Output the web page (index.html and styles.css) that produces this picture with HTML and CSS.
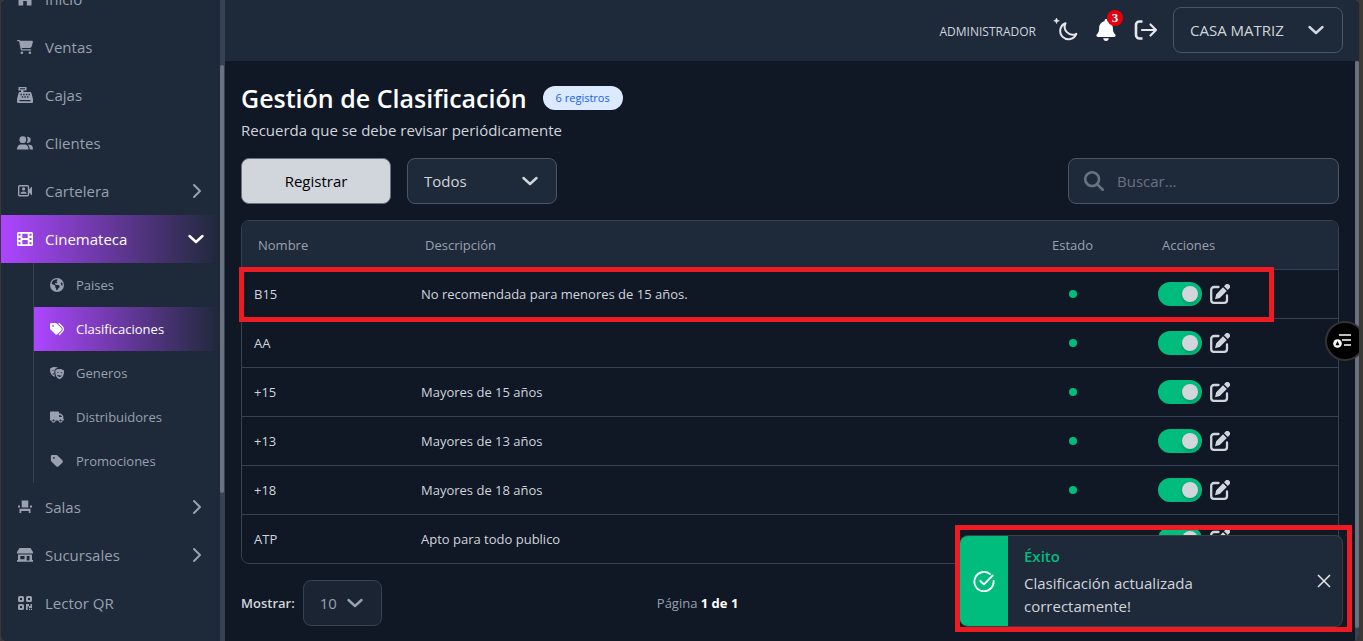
FILE: index.html
```html
<!DOCTYPE html>
<html lang="es">
<head>
    <meta charset="UTF-8">
    <meta name="viewport" content="width=device-width, initial-scale=1.0">
    <title>Gestión de Clasificación</title>
    <link rel="stylesheet" href="styles.css">
</head>
<body>
    <!-- Shared icons -->
    <svg class="sprite" aria-hidden="true">
        <symbol id="chevron-right" viewBox="0 0 16 16"><path d="M6 2l6 6-6 6" fill="none" stroke="currentColor" stroke-width="2" stroke-linecap="round" stroke-linejoin="round"/></symbol>
        <symbol id="chevron-down" viewBox="0 0 16 16"><path d="M1.500 5L8 11l6.500-6" fill="none" stroke="currentColor" stroke-width="2.400" stroke-linecap="round" stroke-linejoin="round"/></symbol>
        <symbol id="edit" viewBox="0 0 20 20">
            <path d="M8.500 3H4a2.800 2.800 0 0 0-2.800 2.800V16A2.800 2.800 0 0 0 4 18.800h10.200A2.800 2.800 0 0 0 17 16v-4.500" fill="none" stroke="currentColor" stroke-width="2.300" stroke-linecap="round"/>
            <path d="M13 3.200l3.800 3.800-7 7-4.800 1.300 1.200-5zM14 2.200l1.400-1.400a2.400 2.400 0 0 1 3.800 3.800L17.800 6z" fill="currentColor"/>
        </symbol>
    </svg>

    <div class="app">
        <aside class="sidebar">
            <nav class="menu">
                <a href="#" class="menu-item">
                    <svg class="icon" viewBox="0 0 16 16"><path d="M8 0L0 7h1.500v7.500h4.700V10h3.600v4.500h4.700V7H16z" fill="currentColor"/></svg>
                    <span>Inicio</span>
                </a>
                <a href="#" class="menu-item">
                    <svg class="icon" viewBox="0 0 576 512"><path fill="currentColor" d="M0 24C0 10.700 10.700 0 24 0H69.500c22 0 41.500 12.800 50.600 32h411c26.300 0 45.500 25 38.600 50.400l-41 152.300c-8.500 31.400-37 53.300-69.500 53.300H170.700l5.400 28.500c2.200 11.300 12.100 19.500 23.600 19.500H488c13.300 0 24 10.700 24 24s-10.700 24-24 24H199.700c-34.600 0-64.300-24.600-70.700-58.500L77.400 54.500c-.7-3.800-4-6.500-7.900-6.500H24C10.700 48 0 37.300 0 24zM128 464a48 48 0 1 1 96 0 48 48 0 1 1 -96 0zm336-48a48 48 0 1 1 0 96 48 48 0 1 1 0-96z"/></svg>
                    <span>Ventas</span>
                </a>
                <a href="#" class="menu-item">
                    <svg class="icon" viewBox="0 0 16 16"><path fill="currentColor" fill-rule="evenodd" d="M1.500 0h8v3.500H6.500V5H13a1.500 1.500 0 0 1 1.500 1.200L16 12v3a1 1 0 0 1-1 1H1a1 1 0 0 1-1-1v-3l1.500-5.800A1.500 1.500 0 0 1 3 5h1V3.500H1.500zM3 1.300v1h5v-1zM3.500 6.800v1.400h1.400V6.800zm2.700 0v1.400h1.400V6.800zm2.700 0v1.400h1.400V6.800zm2.600 0v1.400h1.400V6.800zM4.800 9.300v1.400h1.400V9.300zm2.600 0v1.400h1.400V9.300zm2.600 0v1.400h1.400V9.300zM2.500 13v1.200h11V13z"/></svg>
                    <span>Cajas</span>
                </a>
                <a href="#" class="menu-item">
                    <svg class="icon" viewBox="0 0 16 16"><g fill="currentColor"><circle cx="5.800" cy="4.700" r="3.400"/><path d="M0 14.500c0-3.500 2-5 4-5h3.500c2.500 0 4 1.700 4 5zM9.500 7.600a4.400 4.400 0 0 0 .3-5.600 3 3 0 1 1-.3 5.600zM12.700 14.500H16c0-3.400-1.500-4.800-3.500-4.800h-1.800c1.300 1 2 2.600 2 4.800z"/></g></svg>
                    <span>Clientes</span>
                </a>
                <button type="button" class="menu-item">
                    <svg class="icon" viewBox="0 0 16 16"><rect x="1.700" y="2.700" width="9.800" height="10" rx="1" fill="none" stroke="currentColor" stroke-width="1.400"/><path fill="currentColor" d="M12 6.500l3-3v9l-3-3zM6.600 4.300a1.600 1.600 0 1 1 0 3.200 1.600 1.600 0 0 1 0-3.200zM3.500 10.700c0-3 6.200-3 6.200 0z"/></svg>
                    <span>Cartelera</span>
                    <svg class="arrow"><use href="#chevron-right"/></svg>
                </button>
                <button type="button" class="menu-item active">
                    <svg class="icon" viewBox="0 0 16 16"><path fill="currentColor" fill-rule="evenodd" d="M1.500 1h13A1.500 1.500 0 0 1 16 2.500v11a1.500 1.500 0 0 1-1.500 1.500h-13A1.500 1.500 0 0 1 0 13.500v-11A1.500 1.500 0 0 1 1.500 1zM1.500 2.800v2h2v-2zm0 4.200v2h2V7zm0 4.200v2h2v-2zM12.500 2.800v2h2v-2zm0 4.200v2h2V7zm0 4.200v2h2v-2zM5.300 2.800v4.300h5.400V2.800zm0 6.100v4.300h5.400V8.900z"/></svg>
                    <span>Cinemateca</span>
                    <svg class="arrow"><use href="#chevron-down"/></svg>
                </button>

                <div class="submenu">
                    <a href="#" class="submenu-item">
                        <svg class="icon-sm" viewBox="0 0 512 512"><path fill="currentColor" d="M57.700 193l9.400 16.400c8.300 14.500 21.900 25.200 38 29.800L163 255.700c17.200 4.900 29 20.600 29 38.500v39.900c0 11 6.200 21 16 25.900s16 14.900 16 25.900v39c0 15.600 14.900 26.900 29.900 22.600c16.100-4.600 28.600-17.500 32.700-33.800l2.800-11.200c4.200-16.900 15.200-31.400 30.300-40l8.100-4.600c15-8.500 24.200-24.500 24.200-41.700v-8.300c0-12.700-5.100-24.900-14.100-33.900l-3.900-3.900c-9-9-21.200-14.100-33.900-14.100H257c-11.100 0-22.100-2.900-31.800-8.400l-34.500-19.700c-4.300-2.500-7.600-6.500-9.200-11.200c-3.200-9.600 1.100-20 10.200-24.500l5.900-3c6.600-3.300 14.300-3.900 21.300-1.500l23.200 7.700c8.200 2.700 17.200-.4 21.900-7.500c4.700-7 4.200-16.300-1.200-22.800l-13.600-16.300c-10-12-9.900-29.500 .3-41.300l15.700-18.300c8.800-10.300 10.200-25 3.500-36.700l-2.400-4.200c-3.500-.2-6.900-.3-10.400-.3C163.100 48 84.400 108.900 57.700 193zM464 256c0-36.800-9.600-71.400-26.400-101.500L412 164.800c-15.700 6.300-23.800 23.800-18.500 39.800l16.900 50.700c3.500 10.400 12 18.300 22.600 20.900l29.100 7.300c1.200-9 1.800-18.200 1.800-27.500zM0 256a256 256 0 1 1 512 0A256 256 0 1 1 0 256z"/></svg>
                        <span>Paises</span>
                    </a>
                    <a href="#" class="submenu-item active">
                        <svg class="icon-sm" viewBox="0 0 512 512"><path fill="currentColor" d="M345 39.100L472.800 168.400c52.400 53 52.400 138.200 0 191.200L360.800 472.900c-9.300 9.400-24.500 9.500-33.900 .2s-9.500-24.500-.2-33.900L438.600 325.900c33.900-34.300 33.900-89.400 0-123.700L310.900 72.900c-9.300-9.400-9.200-24.600 .2-33.900s24.600-9.200 33.900 .2zM0 229.500V80C0 53.500 21.500 32 48 32H197.500c17 0 33.300 6.700 45.300 18.700l168 168c25 25 25 65.500 0 90.500L277.300 442.700c-25 25-65.500 25-90.500 0l-168-168C6.700 262.700 0 246.500 0 229.500zM144 144a32 32 0 1 0 -64 0 32 32 0 1 0 64 0z"/></svg>
                        <span>Clasificaciones</span>
                    </a>
                    <a href="#" class="submenu-item">
                        <svg class="icon-sm" viewBox="0 0 16 16"><path fill="currentColor" fill-rule="evenodd" d="M0 3C2.500 1 6 .7 9.500 2 7.500 2.300 6 3 5.300 4.200L4.800 8.500l1 3.700C2.500 11.500 0 9 0 3zM1.800 5.300l2.200.8V4.800zM2.300 9.200l2 .7-.1-2zM6.300 4.500c3-1.500 6.500-1.200 9.700.5 .3 5.500-2 9.500-5.500 10C7 13.500 5.600 9.500 6.300 4.500zM7.800 7.500c.8-1.200 1.800-1.200 2.500.1zm4.200.4c.8-1.200 1.800-1 2.300.4zM8 10c1 3 4.300 3.200 5.500.8-1.800.3-3.700.1-5.500-.8z"/></svg>
                        <span>Generos</span>
                    </a>
                    <a href="#" class="submenu-item">
                        <svg class="icon-sm" viewBox="0 0 640 512"><path fill="currentColor" d="M48 0C21.500 0 0 21.500 0 48V368c0 26.500 21.500 48 48 48H64c0 53 43 96 96 96s96-43 96-96H384c0 53 43 96 96 96s96-43 96-96h32c17.700 0 32-14.300 32-32s-14.300-32-32-32V288 256 237.300c0-17-6.700-33.300-18.700-45.300L512 114.700c-12-12-28.300-18.700-45.300-18.700H416V48c0-26.500-21.500-48-48-48H48zM416 160h50.700L544 237.300V256H416V160zM112 416a48 48 0 1 1 96 0 48 48 0 1 1 -96 0zm368-48a48 48 0 1 1 0 96 48 48 0 1 1 0-96z"/></svg>
                        <span>Distribuidores</span>
                    </a>
                    <a href="#" class="submenu-item">
                        <svg class="icon-sm" viewBox="0 0 448 512"><path fill="currentColor" d="M0 80V229.500c0 17 6.700 33.300 18.700 45.300l176 176c25 25 65.500 25 90.500 0L418.700 317.300c25-25 25-65.500 0-90.500l-176-176c-12-12-28.300-18.700-45.300-18.700H48C21.500 32 0 53.500 0 80zm112 32a32 32 0 1 1 0 64 32 32 0 1 1 0-64z"/></svg>
                        <span>Promociones</span>
                    </a>
                </div>

                <button type="button" class="menu-item">
                    <svg class="icon" viewBox="0 0 16 16"><path fill="currentColor" d="M4.700 1.500h6.600v7H4.700zM1 6.500h2v2H1zM13 6.500h2v2h-2zM2.500 9.700h11v4.300h-1.700v-2H4.200v2H2.500z"/></svg>
                    <span>Salas</span>
                    <svg class="arrow"><use href="#chevron-right"/></svg>
                </button>
                <button type="button" class="menu-item">
                    <svg class="icon" viewBox="0 0 16 16"><path fill="currentColor" fill-rule="evenodd" d="M2.500 1h11L16 5v1.500H0V5zM1 7.500h14V13h1v1.800H0V13h1zM3.300 9v3.300h4.200V9zM9.700 9v4.500h2.800V9z"/></svg>
                    <span>Sucursales</span>
                    <svg class="arrow"><use href="#chevron-right"/></svg>
                </button>
                <a href="#" class="menu-item">
                    <svg class="icon" viewBox="0 0 16 16"><g fill="none" stroke="currentColor" stroke-width="2"><rect x="2" y="2" width="4" height="4" rx=".6"/><rect x="10" y="2" width="4" height="4" rx=".6"/><rect x="2" y="10" width="4" height="4" rx=".6"/></g><path fill="currentColor" d="M9 9h3v2h1.500V9H15v4h-3v-1.500h-1.300V15H9zM12 13.800h1.200V15H12zM13.900 13.800H15V15h-1.100z"/></svg>
                    <span>Lector QR</span>
                </a>
            </nav>
            <div class="scrollbar sidebar-scroll"><span></span></div>
        </aside>

        <div class="content">
            <header class="topbar">
                <span class="role">ADMINISTRADOR</span>
                <div class="tools">
                    <button type="button" class="tool" aria-label="Cambiar tema">
                        <svg viewBox="0 0 26 26"><path d="M12.500 6.200a8.300 8.300 0 1 0 10.800 10.600A8 8 0 0 1 12.500 6.200z" fill="none" stroke="currentColor" stroke-width="2" stroke-linejoin="round"/><path d="M3.500 1l.8 2 2 .8-2 .8-.8 2-.8-2-2-.8 2-.8z" fill="currentColor" stroke="currentColor" stroke-width=".6"/></svg>
                    </button>
                    <button type="button" class="tool bell" aria-label="Notificaciones">
                        <svg viewBox="0 0 448 512"><path fill="currentColor" d="M224 0c-17.700 0-32 14.300-32 32V51.200C119 66 64 130.600 64 208v18.800c0 47-17.300 92.400-48.500 127.600l-7.400 8.300c-8.400 9.400-10.400 22.900-5.300 34.400S19.400 416 32 416H416c12.600 0 24-7.400 29.200-18.900s3.100-25-5.300-34.400l-7.400-8.300C401.300 319.200 384 273.900 384 226.800V208c0-77.400-55-142-128-156.800V32c0-17.700-14.300-32-32-32zm45.300 493.300c12-12 18.700-28.300 18.700-45.300H224 160c0 17 6.700 33.300 18.700 45.300s28.300 18.700 45.300 18.700s33.300-6.700 45.300-18.700z"/></svg>
                        <span class="count">3</span>
                    </button>
                    <button type="button" class="tool" aria-label="Salir">
                        <svg viewBox="0 0 26 26"><path d="M9.500 4.500h-3a3.500 3.500 0 0 0-3.500 3.500v10a3.500 3.500 0 0 0 3.500 3.500h3" fill="none" stroke="currentColor" stroke-width="2.600"/><path d="M9 13h14M17.500 7.500L23 13l-5.500 5.500" fill="none" stroke="currentColor" stroke-width="2.200" stroke-linecap="round" stroke-linejoin="round"/></svg>
                    </button>
                </div>
                <div class="select-box branch">
                    <select aria-label="Sucursal"><option>CASA MATRIZ</option></select>
                    <svg class="select-arrow"><use href="#chevron-down"/></svg>
                </div>
            </header>

            <main class="page">
                <div class="page-title">
                    <h1>Gestión de Clasificación</h1>
                    <span class="badge">6 registros</span>
                </div>
                <p class="subtitle">Recuerda que se debe revisar periódicamente</p>

                <div class="toolbar">
                    <button type="button" class="btn-register">Registrar</button>
                    <div class="select-box filter">
                        <select aria-label="Filtro"><option>Todos</option></select>
                        <svg class="select-arrow"><use href="#chevron-down"/></svg>
                    </div>
                    <div class="search">
                        <svg viewBox="0 0 512 512"><path fill="currentColor" d="M416 208c0 45.900-14.900 88.300-40 122.700L502.600 457.400c12.500 12.500 12.500 32.800 0 45.300s-32.800 12.500-45.300 0L330.700 376c-34.400 25.200-76.800 40-122.700 40C93.100 416 0 322.900 0 208S93.100 0 208 0S416 93.100 416 208zM208 352a144 144 0 1 0 0-288 144 144 0 1 0 0 288z"/></svg>
                        <input type="text" placeholder="Buscar..." aria-label="Buscar">
                    </div>
                </div>

                <div class="table-area">
                    <div class="table-card">
                        <table>
                            <thead>
                                <tr><th class="col-name">Nombre</th><th>Descripción</th><th class="col-state">Estado</th><th class="col-actions">Acciones</th></tr>
                            </thead>
                            <tbody>
                                <tr>
                                    <td>B15</td>
                                    <td>No recomendada para menores de 15 años.</td>
                                    <td class="state"><span class="dot"></span></td>
                                    <td><div class="actions"><input type="checkbox" class="toggle" aria-label="Activar B15" checked><button type="button" class="edit" aria-label="Editar B15"><svg><use href="#edit"/></svg></button></div></td>
                                </tr>
                                <tr>
                                    <td>AA</td>
                                    <td></td>
                                    <td class="state"><span class="dot"></span></td>
                                    <td><div class="actions"><input type="checkbox" class="toggle" aria-label="Activar AA" checked><button type="button" class="edit" aria-label="Editar AA"><svg><use href="#edit"/></svg></button></div></td>
                                </tr>
                                <tr>
                                    <td>+15</td>
                                    <td>Mayores de 15 años</td>
                                    <td class="state"><span class="dot"></span></td>
                                    <td><div class="actions"><input type="checkbox" class="toggle" aria-label="Activar +15" checked><button type="button" class="edit" aria-label="Editar +15"><svg><use href="#edit"/></svg></button></div></td>
                                </tr>
                                <tr>
                                    <td>+13</td>
                                    <td>Mayores de 13 años</td>
                                    <td class="state"><span class="dot"></span></td>
                                    <td><div class="actions"><input type="checkbox" class="toggle" aria-label="Activar +13" checked><button type="button" class="edit" aria-label="Editar +13"><svg><use href="#edit"/></svg></button></div></td>
                                </tr>
                                <tr>
                                    <td>+18</td>
                                    <td>Mayores de 18 años</td>
                                    <td class="state"><span class="dot"></span></td>
                                    <td><div class="actions"><input type="checkbox" class="toggle" aria-label="Activar +18" checked><button type="button" class="edit" aria-label="Editar +18"><svg><use href="#edit"/></svg></button></div></td>
                                </tr>
                                <tr>
                                    <td>ATP</td>
                                    <td>Apto para todo publico</td>
                                    <td class="state"><span class="dot"></span></td>
                                    <td><div class="actions"><input type="checkbox" class="toggle" aria-label="Activar ATP" checked><button type="button" class="edit" aria-label="Editar ATP"><svg><use href="#edit"/></svg></button></div></td>
                                </tr>
                            </tbody>
                        </table>
                    </div>
                    <div class="row-mark"></div>
                </div>

                <div class="pager">
                    <div class="page-size">
                        <label for="size">Mostrar:</label>
                        <div class="select-box size">
                            <select id="size"><option>10</option></select>
                            <svg class="select-arrow"><use href="#chevron-down"/></svg>
                        </div>
                    </div>
                    <p class="page-info">Página <b>1 de 1</b></p>
                </div>
            </main>
            <div class="scrollbar page-scroll"><span></span></div>
        </div>

        <button type="button" class="float-btn" aria-label="Accesibilidad">
            <svg viewBox="0 0 20 16"><path d="M6 2h12M9 7h9M11 12h7" stroke="currentColor" stroke-width="1.500"/><circle cx="4.500" cy="10.500" r="4.300" fill="currentColor"/><path d="M4.500 8L2.500 12.200h4z" fill="#000"/></svg>
        </button>
    </div>

    <div class="toast-mark">
        <div class="toast" role="status">
            <div class="toast-icon">
                <svg viewBox="0 0 24 24" fill="none" stroke="currentColor" stroke-width="2" stroke-linecap="round" stroke-linejoin="round"><path d="M18.500 4.400A10.500 10.500 0 1 0 22.500 12"/><path d="M8 12l4 3.800L21.500 6"/></svg>
            </div>
            <div class="toast-body">
                <strong>Éxito</strong>
                <p>Clasificación actualizada correctamente!</p>
            </div>
            <button type="button" class="toast-close" aria-label="Cerrar">
                <svg viewBox="0 0 14 14"><path d="M1 1l12 12M13 1L1 13" stroke="currentColor" stroke-width="1.500"/></svg>
            </button>
        </div>
    </div>
</body>
</html>
```
FILE: styles.css
```css
* {
    box-sizing: border-box;
}
body {
    margin: 0;
    background: #3a3937;
    color: #d1d5dc;
    font-family: "Open Sans", "Noto Sans", sans-serif;
    font-size: 15px;
    line-height: 24px;
}
h1, p {
    margin: 0;
}
a {
    color: inherit;
    text-decoration: none;
}
button, input, select {
    font: inherit;
    color: inherit;
    margin: 0;
}
button {
    background: none;
    border: none;
    padding: 0;
    cursor: pointer;
}
svg {
    display: block;
    flex-shrink: 0;
}
.sprite {
    display: none;
}
.app {
    position: relative;
    display: flex;
    height: 100vh;
    margin: 0 4px 0 1px;
    background: #101725;
    border-radius: 6px;
    overflow: hidden;
}

/* Sidebar */
.sidebar {
    display: flex;
    flex-shrink: 0;
    width: 224px;
    background: #1e2939;
    border-right: 1px solid #364153;
    color: #99a1af;
    overflow: hidden;
}
.menu {
    flex: 1;
    margin-top: -25px;
}
.menu-item {
    display: flex;
    align-items: center;
    gap: 12px;
    width: 100%;
    height: 48px;
    padding: 0 16px;
    text-align: left;
}
.icon {
    width: 16px;
    height: 16px;
}
.arrow {
    width: 16px;
    height: 16px;
    margin-left: auto;
}
.active {
    background: linear-gradient(to right, #ad46ff, transparent);
    color: #fff;
}
.submenu {
    margin-left: 32px;
    border-left: 1px solid #364153;
    font-size: 13px;
}
.submenu-item {
    display: flex;
    align-items: center;
    gap: 12px;
    height: 44px;
    padding: 0 16px;
}
.icon-sm {
    width: 14px;
    height: 14px;
}
.scrollbar {
    width: 4px;
    background: #364153;
}
.scrollbar span {
    display: block;
    background: #6a7282;
    border-radius: 2px;
}
.sidebar-scroll {
    padding-top: 65px;
}
.sidebar-scroll span {
    height: 428px;
}

/* Top bar */
.content {
    flex: 1;
    display: grid;
    grid-template: 61px 1fr / 1fr 4px;
    min-width: 0;
}
.topbar {
    grid-column: 1 / 3;
    display: flex;
    align-items: center;
    justify-content: flex-end;
    gap: 14px;
    padding: 0 16px 2px;
    background: #1e2939;
}
.role {
    font-size: 12px;
    padding: 4px 3px 0 0;
}
.tools {
    display: flex;
    align-items: center;
    gap: 14px;
}
.tool {
    position: relative;
    color: #e5e7eb;
}
.tool svg {
    width: 26px;
    height: 26px;
}
.bell {
    color: #fff;
}
.bell svg {
    height: 22px;
}
.count {
    position: absolute;
    top: -9px;
    right: -4px;
    width: 16px;
    height: 16px;
    border-radius: 50%;
    background: #e7000b;
    font: bold 13px/16px "Liberation Serif", serif;
    text-align: center;
}
.select-box {
    position: relative;
    height: 46px;
}
.select-box select {
    appearance: none;
    width: 100%;
    height: 100%;
    padding: 0 16px;
    background: #1e2939;
    border: 1px solid #4a5565;
    border-radius: 8px;
}
.select-arrow {
    position: absolute;
    top: 15px;
    right: 19px;
    width: 16px;
    height: 16px;
    pointer-events: none;
}
.branch {
    width: 170px;
}

/* Page */
.page {
    padding: 19px 16px 0;
    min-width: 0;
}
.page-scroll span {
    height: calc(100% - 13px);
}
.page-title {
    display: flex;
    align-items: center;
    gap: 16px;
    height: 36px;
}
h1 {
    color: #fff;
    font-size: 25px;
    font-weight: 600;
    line-height: 36px;
}
.badge {
    padding: 0 13px;
    background: #dbeafe;
    border-radius: 12px;
    color: #155dfc;
    font-size: 11px;
    line-height: 24px;
}
.subtitle {
    padding: 2px 0 16px;
}
.toolbar {
    display: flex;
    gap: 16px;
    margin-bottom: 16px;
}
.btn-register {
    width: 150px;
    height: 46px;
    background: #d1d5dc;
    border: 1px solid #6a7282;
    border-radius: 8px;
    color: #000;
}
.filter {
    width: 150px;
}
.search {
    display: flex;
    align-items: center;
    gap: 13px;
    width: 271px;
    height: 46px;
    margin-left: auto;
    padding: 0 15px;
    background: #1e2939;
    border: 1px solid #4a5565;
    border-radius: 8px;
    color: #6a7282;
}
.search svg {
    width: 20px;
    height: 20px;
}
.search input {
    width: 100%;
    padding: 0;
    background: none;
    border: none;
    outline: none;
    color: #d1d5dc;
}
.search input::placeholder {
    color: #6a7282;
}

/* Table */
.table-area {
    position: relative;
}
.table-card {
    border: 1px solid #364153;
    border-radius: 8px;
    overflow: hidden;
}
table {
    width: 100%;
    table-layout: fixed;
    border-spacing: 0;
    font-size: 13px;
}
th, td {
    height: 49px;
    border-bottom: 1px solid #364153;
    text-align: left;
}
th {
    padding: 0 16px;
    background: #1e2939;
    color: #99a1af;
    font-weight: 400;
}
td {
    padding: 0 12px;
}
tbody tr:last-child td {
    height: 48px;
    border-bottom: none;
}
.col-name {
    width: 167px;
}
.col-state {
    width: 147px;
    text-align: center;
}
.col-actions {
    width: 192px;
}
.dot {
    display: block;
    width: 8px;
    height: 8px;
    margin: 0 auto;
    border-radius: 50%;
    background: #00bc7d;
}
.actions {
    display: flex;
    align-items: center;
    gap: 8px;
}
.toggle {
    appearance: none;
    display: flex;
    align-items: center;
    justify-content: flex-end;
    width: 44px;
    height: 24px;
    padding: 0 4px;
    border-radius: 12px;
    background: #00bc7d;
}
.toggle::before {
    content: "";
    width: 16px;
    height: 16px;
    border-radius: 50%;
    background: #d1d5dc;
    box-shadow: 0 2px 4px rgba(0, 0, 0, 0.2);
}
.edit svg {
    width: 20px;
    height: 20px;
}
.row-mark {
    position: absolute;
    top: 47px;
    left: -2px;
    right: 65px;
    height: 55px;
    border: 5px solid #ed1c24;
    pointer-events: none;
}

/* Pager */
.pager {
    display: grid;
    grid-template-columns: 9fr auto 13fr;
    align-items: center;
    margin-top: 16px;
    font-size: 13px;
}
.page-size {
    display: flex;
    align-items: center;
    gap: 8px;
}
.page-size label {
    font-weight: 600;
}
.size {
    width: 79px;
    color: #99a1af;
    font-size: 15px;
}
.size select {
    border-color: #364153;
    background: #1b2433;
}
.page-info {
    color: #99a1af;
}
.page-info b {
    color: #fff;
}

/* Floating button */
.float-btn {
    position: absolute;
    top: 321px;
    right: -6px;
    display: flex;
    align-items: center;
    justify-content: center;
    width: 40px;
    height: 40px;
    border: 2px solid #333;
    border-radius: 50%;
    background: #000;
    color: #fff;
}
.float-btn svg {
    width: 20px;
    height: 16px;
    margin-right: 4px;
}

/* Toast */
.toast-mark {
    position: fixed;
    right: 11px;
    bottom: 9px;
    width: 397px;
    padding: 5px 4px 0 0;
    border: 5px solid #ed1c24;
}
.toast {
    display: flex;
    align-items: center;
    height: 92px;
    background: #1e2939;
    border: 1px solid #3f3f3f;
    border-left: none;
    border-radius: 8px;
    overflow: hidden;
}
.toast-icon {
    display: flex;
    align-items: center;
    justify-content: center;
    width: 48px;
    height: 100%;
    background: #00bc7d;
    color: #fff;
}
.toast-icon svg {
    width: 22px;
    height: 22px;
}
.toast-body {
    flex: 1;
    padding: 0 90px 0 16px;
    line-height: 23px;
}
.toast-body strong {
    display: block;
    margin-bottom: 4px;
    color: #00bc7d;
    font-weight: 600;
}
.toast-close {
    margin-right: 11px;
    color: #e5e7eb;
}
.toast-close svg {
    width: 14px;
    height: 14px;
}
```
